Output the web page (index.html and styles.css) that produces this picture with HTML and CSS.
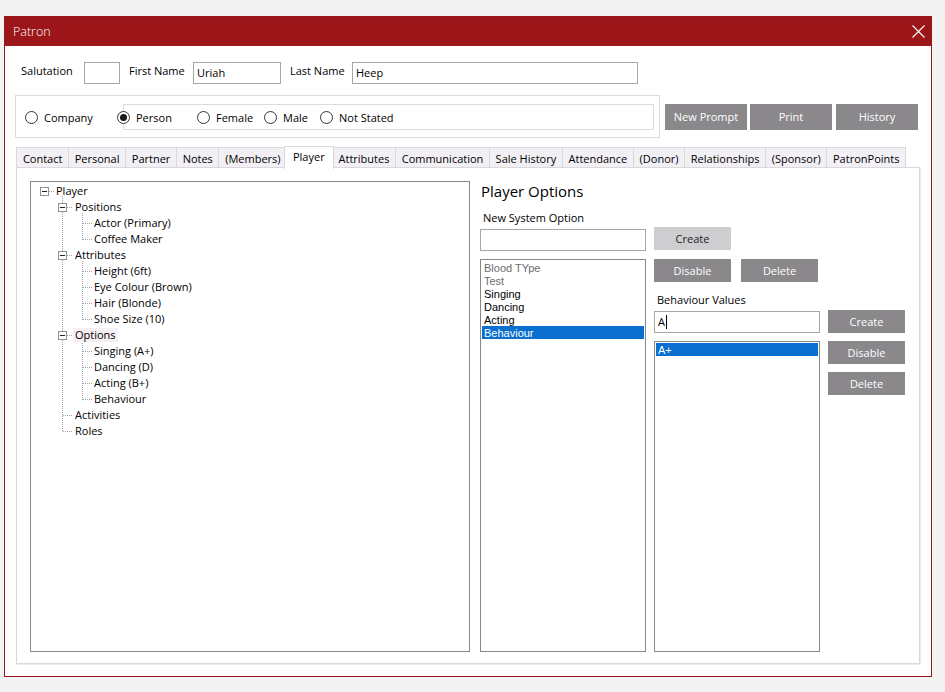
FILE: index.html
```html
<!DOCTYPE html>
<html>
<head>
<meta charset="utf-8">
<title>Patron</title>
<link rel="stylesheet" href="styles.css">
</head>
<body>
<div class="window">
  <div class="titlebar">
    <span class="title">Patron</span>
    <svg class="close-icon" width="13" height="13" viewBox="0 0 13 13"><path d="M0.5 0.5L12.5 12.5M12.5 0.5L0.5 12.5" stroke="#fff" stroke-width="1.1" fill="none"/></svg>
  </div>
  <div class="content">
    <div class="name-row">
      <span class="lbl lbl-sal">Salutation</span><div class="field f-sal"></div>
      <span class="lbl lbl-first">First Name</span><div class="field f-first">Uriah</div>
      <span class="lbl lbl-last">Last Name</span><div class="field f-last">Heep</div>
    </div>
    <div class="type-row">
      <div class="groupbox">
        <div class="radio-item ri-company"><span class="radio"></span>Company</div>
        <div class="inner-group">
          <div class="radio-item ri-person"><span class="radio checked"></span>Person</div>
          <div class="radio-item ri-female"><span class="radio"></span>Female</div>
          <div class="radio-item ri-male"><span class="radio"></span>Male</div>
          <div class="radio-item"><span class="radio"></span>Not Stated</div>
        </div>
      </div>
      <div class="actions">
        <div class="btn btn-top">New Prompt</div>
        <div class="btn btn-top btn-print">Print</div>
        <div class="btn btn-top btn-history">History</div>
      </div>
    </div>
    <div class="tabs">
      <div class="tab">Contact</div>
      <div class="tab">Personal</div>
      <div class="tab">Partner</div>
      <div class="tab">Notes</div>
      <div class="tab">(Members)</div>
      <div class="tab active">Player</div>
      <div class="tab">Attributes</div>
      <div class="tab">Communication</div>
      <div class="tab">Sale History</div>
      <div class="tab">Attendance</div>
      <div class="tab">(Donor)</div>
      <div class="tab">Relationships</div>
      <div class="tab">(Sponsor)</div>
      <div class="tab">PatronPoints</div>
    </div>
    <div class="panel">
      <div class="tree">
        <svg class="tree-lines" width="120" height="260" viewBox="0 0 120 260" shape-rendering="crispEdges">
          <g stroke="#a0a0a0" stroke-width="1" stroke-dasharray="1 1" fill="none">
            <path d="M31.5 14V250"/>
            <path d="M18 9.5H24"/>
            <path d="M36 25.5H42M36 73.5H42M36 153.5H42M32 233.5H42M32 249.5H42"/>
            <path d="M51.5 31V57.5M51.5 79V137.5M51.5 159V217.5"/>
            <path d="M52 41.5H62M52 57.5H62M52 89.5H62M52 105.5H62M52 121.5H62M52 137.5H62M52 169.5H62M52 185.5H62M52 201.5H62M52 217.5H62"/>
          </g>
          <g stroke="#919191" fill="#fff">
            <rect x="9.5" y="5.5" width="8" height="8"/>
            <rect x="27.5" y="21.5" width="8" height="8"/>
            <rect x="27.5" y="69.5" width="8" height="8"/>
            <rect x="27.5" y="149.5" width="8" height="8"/>
          </g>
          <g stroke="#222">
            <path d="M11 9.5H16M29 25.5H34M29 73.5H34M29 153.5H34"/>
          </g>
        </svg>
        <div class="node l0">Player</div>
        <div class="node l1">Positions</div>
        <div class="node l2">Actor (Primary)</div>
        <div class="node l2">Coffee Maker</div>
        <div class="node l1">Attributes</div>
        <div class="node l2">Height (6ft)</div>
        <div class="node l2">Eye Colour (Brown)</div>
        <div class="node l2">Hair (Blonde)</div>
        <div class="node l2">Shoe Size (10)</div>
        <div class="node l1"><span class="hot">Options</span></div>
        <div class="node l2">Singing (A+)</div>
        <div class="node l2">Dancing (D)</div>
        <div class="node l2">Acting (B+)</div>
        <div class="node l2">Behaviour</div>
        <div class="node l1">Activities</div>
        <div class="node l1">Roles</div>
      </div>
      <div class="options">
        <div class="col col-a">
          <div class="opt-title">Player Options</div>
          <div class="opt-label">New System Option</div>
          <div class="field opt-input"></div>
          <div class="listbox">
            <div class="item disabled">Blood TYpe</div>
            <div class="item disabled">Test</div>
            <div class="item">Singing</div>
            <div class="item">Dancing</div>
            <div class="item">Acting</div>
            <div class="item selected">Behaviour</div>
          </div>
        </div>
        <div class="col col-b">
          <div class="btn btn-sm btn-light">Create</div>
          <div class="btn-row">
            <div class="btn btn-sm">Disable</div>
            <div class="btn btn-sm">Delete</div>
          </div>
          <div class="opt-label label-values">Behaviour Values</div>
          <div class="field opt-input">A<span class="caret"></span></div>
          <div class="listbox">
            <div class="item selected">A+</div>
          </div>
        </div>
        <div class="col col-c">
          <div class="btn btn-sm">Create</div>
          <div class="btn btn-sm stack">Disable</div>
          <div class="btn btn-sm stack">Delete</div>
        </div>
      </div>
    </div>
  </div>
</div>
</body>
</html>
```
FILE: styles.css
```css
body {
  margin: 0;
  background: #f3f3f3;
  font-family: "Open Sans", "Noto Sans", sans-serif;
  font-size: 11px;
  color: #000;
}

.window {
  margin: 16px 0 0 4px;
  width: 928px;
  height: 661px;
  box-sizing: border-box;
  border: 1px solid #98171b;
  background: #fff;
}

.titlebar {
  height: 29px;
  background: #9b1519;
  display: flex;
  align-items: center;
  justify-content: space-between;
  padding: 0 6px 0 8px;
  color: #fff;
}

.title {
  font-size: 12.5px;
  font-weight: 300;
}

.close-icon {
  display: block;
}

.content {
  padding-top: 16px;
}

/* name row */
.name-row {
  display: flex;
  align-items: flex-start;
  padding-left: 16px;
  height: 22px;
}

.lbl {
  line-height: 18px;
}

.lbl-sal { width: 63px; }
.lbl-first { width: 64px; }
.lbl-last { width: 62px; }

.field {
  height: 22px;
  box-sizing: border-box;
  border: 1px solid #a7a7a7;
  padding: 0 3px;
  line-height: 19px;
  background: #fff;
}

.f-sal { width: 36px; margin-right: 9px; }
.f-first { width: 88px; margin-right: 9px; }
.f-last { width: 286px; }

/* type row */
.type-row {
  display: flex;
  align-items: flex-start;
  margin-top: 11px;
  padding-left: 10px;
}

.groupbox {
  width: 645px;
  height: 43px;
  box-sizing: border-box;
  border: 1px solid #dcdcdc;
  display: flex;
  align-items: flex-start;
  padding: 8px 0 0 9px;
}

.radio-item {
  display: flex;
  align-items: center;
  height: 26px;
  gap: 6px;
  white-space: nowrap;
}

.ri-company { width: 98px; }
.ri-person { width: 80px; margin-left: -7px; }
.ri-female { width: 67px; }
.ri-male { width: 56px; }

.radio {
  width: 13px;
  height: 13px;
  box-sizing: border-box;
  border: 1px solid #333;
  border-radius: 50%;
  background: #fff;
  padding: 2px;
  flex: none;
}

.radio.checked::after {
  content: "";
  display: block;
  width: 7px;
  height: 7px;
  border-radius: 50%;
  background: #1a1a1a;
}

.inner-group {
  width: 531px;
  height: 26px;
  box-sizing: border-box;
  border: 1px solid #dcdcdc;
  display: flex;
  align-items: center;
}

.inner-group .radio-item {
  height: 23px;
}

.actions {
  display: flex;
  margin-left: 5px;
  margin-top: 9px;
}

.btn {
  width: 82px;
  height: 26px;
  box-sizing: border-box;
  background: #8a888b;
  color: #fff;
  display: flex;
  align-items: center;
  justify-content: center;
  white-space: nowrap;
}

.btn-top { padding-bottom: 2px; }
.btn-print { margin-left: 3px; }
.btn-history { margin-left: 4px; }

/* tabs */
.tabs {
  display: flex;
  align-items: flex-end;
  margin: 8px 0 0 11px;
  height: 21px;
}

.tab {
  height: 20px;
  box-sizing: border-box;
  border: 1px solid #d9d9dc;
  border-bottom: none;
  background: #f2f0f4;
  padding: 2px 5.4px 0 5.9px;
  line-height: 18px;
  margin-right: -1px;
  white-space: nowrap;
}

.tab.active {
  height: 23px;
  background: #fff;
  margin: 0 -2px -2px -2px;
  padding: 1px 8px 0;
  line-height: 18px;
  position: relative;
  z-index: 1;
}

/* panel */
.panel {
  margin-left: 11px;
  width: 904px;
  height: 497px;
  box-sizing: border-box;
  border: 1px solid #d9d9dc;
  box-shadow: 1px 1px 0 #ececec;
  display: flex;
  align-items: flex-start;
  gap: 10px;
  padding: 13px 13px 0;
}

.tree {
  width: 440px;
  height: 471px;
  box-sizing: border-box;
  border: 1px solid #828790;
  position: relative;
  padding-top: 1px;
  flex: none;
}

.tree-lines {
  position: absolute;
  left: 0;
  top: 0;
}

.node {
  position: relative;
  height: 16px;
  line-height: 16px;
  white-space: nowrap;
}

.l0 { padding-left: 25px; }
.l1 { padding-left: 44px; }
.l2 { padding-left: 63px; }

.hot {
  display: inline-block;
  vertical-align: top;
  margin-top: 1px;
  line-height: 14px;
  padding: 0 2px;
  margin-left: -2px;
  background: #f6f0f4;
}

/* options */
.options {
  display: flex;
  gap: 8px;
  height: 471px;
}

.col {
  display: flex;
  flex-direction: column;
}

.col-a, .col-b { width: 166px; }
.col-c { width: 77px; }

.opt-title {
  font-size: 15px;
  line-height: 20px;
  padding-left: 1px;
}

.opt-label {
  margin-top: 9px;
  line-height: 16px;
  padding-left: 3px;
}

.opt-input {
  margin-top: 3px;
  flex: none;
}

.caret {
  display: inline-block;
  width: 1px;
  height: 14px;
  background: #000;
  vertical-align: -3px;
  margin-left: 1px;
}

.listbox {
  margin-top: 8px;
  flex: 1;
  box-sizing: border-box;
  border: 1px solid #828790;
  padding: 1px;
  font-family: "Liberation Sans", Arial, sans-serif;
  font-size: 11px;
}

.item {
  height: 13px;
  line-height: 15px;
  padding-left: 2px;
  white-space: nowrap;
  overflow: hidden;
}

.item.disabled { color: #6d6d6d; }

.item.selected {
  background: #0a6fcf;
  color: #fff;
}

.btn-sm {
  width: 77px;
  height: 23px;
  flex: none;
}

.btn-light {
  background: #cecdd0;
  color: #222;
  margin-top: 46px;
}

.btn-row {
  display: flex;
  gap: 10px;
  margin-top: 9px;
}

.label-values {
  margin-top: 10px;
}

.col-c .btn-sm:first-child { margin-top: 129px; }
.col-c .stack { margin-top: 8px; }
```
